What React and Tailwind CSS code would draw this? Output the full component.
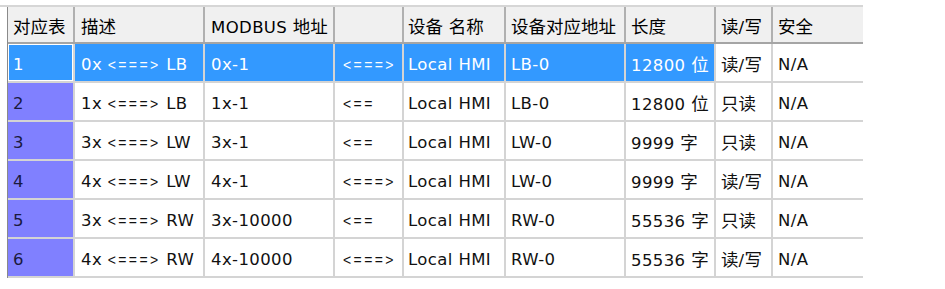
import React from "react";

const cols = [
  { w: "w-[67px]", pl: "pl-[5px]" },
  { w: "w-[130px]", pl: "pl-[6px]" },
  { w: "w-[130px]", pl: "pl-[6px]" },
  { w: "w-[69px]", pl: "pl-[8px]" },
  { w: "w-[102px]", pl: "pl-[4px]" },
  { w: "w-[120px]", pl: "pl-[5px]" },
  { w: "w-[90px]", pl: "pl-[5px]" },
  { w: "w-[57px]", pl: "pl-[5px]" },
  { w: "w-[90px]", pl: "pl-[5px]" },
];

const header = ["对应表", "描述", "MODBUS 地址", "", "设备 名称", "设备对应地址", "长度", "读/写", "安全"];

const rows = [
  ["1", "0x <===> LB", "0x-1", "<===>", "Local HMI", "LB-0", "12800 位", "读/写", "N/A"],
  ["2", "1x <===> LB", "1x-1", "<==", "Local HMI", "LB-0", "12800 位", "只读", "N/A"],
  ["3", "3x <===> LW", "3x-1", "<==", "Local HMI", "LW-0", "9999 字", "只读", "N/A"],
  ["4", "4x <===> LW", "4x-1", "<===>", "Local HMI", "LW-0", "9999 字", "读/写", "N/A"],
  ["5", "3x <===> RW", "3x-10000", "<==", "Local HMI", "RW-0", "55536 字", "只读", "N/A"],
  ["6", "4x <===> RW", "4x-10000", "<===>", "Local HMI", "RW-0", "55536 字", "读/写", "N/A"],
];

function Txt({ text }) {
  const parts = text.split(/([\u4e00-\u9fff]+|[<=>]+)/).filter((p) => p !== "");
  return (
    <span className="whitespace-pre">
      {parts.map((p, i) => {
        if (/[\u4e00-\u9fff]/.test(p))
          return (
            <span key={i} className="text-[17.5px] tracking-normal font-['Noto_Sans_CJK_SC',sans-serif]">
              {p}
            </span>
          );
        if (/[<=>]/.test(p))
          return (
            <span key={i} className="text-[14px] tracking-[2.4px] font-['Liberation_Sans',sans-serif]">
              {p}
            </span>
          );
        return <span key={i}>{p}</span>;
      })}
    </span>
  );
}

export default function App() {
  return (
    <div className="w-[945px] h-[289px] bg-white pt-[5px] font-['DejaVu_Sans','Noto_Sans_CJK_SC',sans-serif] text-[16.5px] tracking-[0.4px] text-black">
      <div className="w-[863px] h-[2px] bg-[#d6d6d6]" />
      <div className="ml-[7px] w-[856px] border-l border-[#8a8a8a]">
        <div className="flex h-[37px] bg-[#f0f0f0] border-b-2 border-[#a5a5a5]">
          {header.map((h, i) => (
            <div
              key={i}
              className={`${cols[i].w} ${cols[i].pl} flex items-center pt-[5px] ${
                i < 8 ? "border-r-2 border-[#b0b0b0]" : ""
              }`}
            >
              <Txt text={h} />
            </div>
          ))}
        </div>
        {rows.map((r, ri) => (
          <div key={ri} className="flex h-[39px] border-b-2 border-[#d4d4d4]">
            {r.map((c, ci) => {
              let bg = "bg-white";
              let color = "text-[#111]";
              if (ri === 0 && ci < 7) {
                bg = "bg-[#3399ff]";
                color = "text-white";
              } else if (ci === 0) {
                bg = "bg-[#8080ff]";
                color = "text-[#1a1a40]";
              }
              const focus = ri === 0 && ci === 0 ? "shadow-[inset_0_0_0_1px_#ffffff]" : "";
              return (
                <div
                  key={ci}
                  className={`${cols[ci].w} ${cols[ci].pl} ${bg} ${color} ${focus} flex items-center pt-[5px] ${
                    ci < 8 ? "border-r-2 border-[#d4d4d4]" : ""
                  }`}
                >
                  <Txt text={c} />
                </div>
              );
            })}
          </div>
        ))}
      </div>
    </div>
  );
}
